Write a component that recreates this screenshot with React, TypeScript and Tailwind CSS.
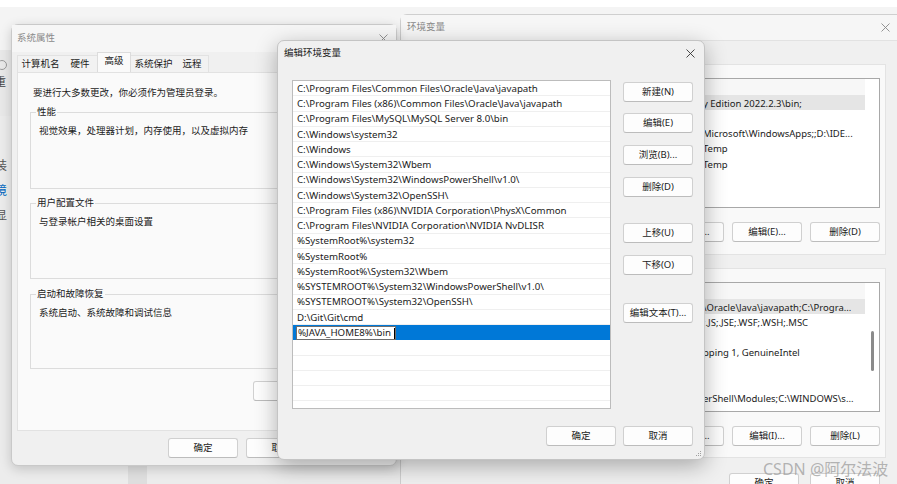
import React from "react";

const paths = [
  "C:\\Program Files\\Common Files\\Oracle\\Java\\javapath",
  "C:\\Program Files (x86)\\Common Files\\Oracle\\Java\\javapath",
  "C:\\Program Files\\MySQL\\MySQL Server 8.0\\bin",
  "C:\\Windows\\system32",
  "C:\\Windows",
  "C:\\Windows\\System32\\Wbem",
  "C:\\Windows\\System32\\WindowsPowerShell\\v1.0\\",
  "C:\\Windows\\System32\\OpenSSH\\",
  "C:\\Program Files (x86)\\NVIDIA Corporation\\PhysX\\Common",
  "C:\\Program Files\\NVIDIA Corporation\\NVIDIA NvDLISR",
  "%SystemRoot%\\system32",
  "%SystemRoot%",
  "%SystemRoot%\\System32\\Wbem",
  "%SYSTEMROOT%\\System32\\WindowsPowerShell\\v1.0\\",
  "%SYSTEMROOT%\\System32\\OpenSSH\\",
  "D:\\Git\\Git\\cmd",
];

// [name, hidden head of value, visible tail of value, selected]
const userVars: [string, string, string, boolean][] = [
  ["IntelliJ IDEA Community Edition", "D:\\IDEA\\IntelliJ IDEA Communit", "y Edition 2022.2.3\\bin;", true],
  ["OneDrive", "C:\\Users\\Administrator\\OneDrive", "", false],
  ["Path", "%USERPROFILE%\\AppData\\Local\\", "Microsoft\\WindowsApps;;D:\\IDE...", false],
  ["TEMP", "%USERPROFILE%\\AppData\\Local\\", "Temp", false],
  ["TMP", "%USERPROFILE%\\AppData\\Local\\", "Temp", false],
];

const sysVars: [string, string, string, boolean][] = [
  ["Path", "C:\\Program Files\\Common Files", "\\Oracle\\Java\\javapath;C:\\Progra...", true],
  ["PATHEXT", ".COM;.EXE;.BAT;.CMD;.VBS;.VBE", ";.JS;.JSE;.WSF;.WSH;.MSC", false],
  ["PROCESSOR_ARCHITECTURE", "AMD64", "", false],
  ["PROCESSOR_IDENTIFIER", "Intel64 Family 6 Model 154 Ste", "pping 1, GenuineIntel", false],
  ["PROCESSOR_LEVEL", "6", "", false],
  ["PROCESSOR_REVISION", "9a04", "", false],
  ["PSModulePath", "%ProgramFiles%\\WindowsPow", "erShell\\Modules;C:\\WINDOWS\\s...", false],
];

function Btn({ children, className = "" }: { children: React.ReactNode; className?: string }) {
  return (
    <div
      className={`flex h-[20px] w-[70px] flex-none items-center justify-center rounded-[3px] border border-[#d0d0d0] border-b-[#bcbcbc] bg-[#fdfdfd] pt-[1px] text-[9.5px] text-[#1b1b1b] ${className}`}
    >
      {children}
    </div>
  );
}

function CloseX({ color = "#333" }: { color?: string }) {
  return (
    <svg width="9" height="9" viewBox="0 0 9 9">
      <path d="M0.5 0.5 L8.5 8.5 M8.5 0.5 L0.5 8.5" stroke={color} strokeWidth="0.9" />
    </svg>
  );
}

function GroupBox({ label, text, className = "" }: { label: string; text: string; className?: string }) {
  return (
    <div className={`relative ml-[12px] w-[350px] border border-[#dcdcdc] ${className}`}>
      <span className="absolute -top-[8px] left-[5px] bg-[#fafafa] px-[1px] text-[9.5px] text-[#1b1b1b]">{label}</span>
      <div className="pl-[8px] pt-[11px] text-[9.5px] text-[#1b1b1b]">{text}</div>
    </div>
  );
}

function VarList({ rows, thumb }: { rows: [string, string, string, boolean][]; thumb?: boolean }) {
  return (
    <div className="ml-[5px] mt-[13px] flex h-[130px] w-[462px] border border-[#a8a8a8] bg-white">
      <div className="flex flex-1 flex-col">
        <div className="flex h-[16px] items-center bg-[#f7f7f7] pt-[2px] text-[9.5px] text-[#1b1b1b]">
          <span className="w-[95px] pl-[4px]">变量</span>
          <span>值</span>
        </div>
        {rows.map(([name, head, tail, sel]) => (
          <div
            key={name}
            className={`flex h-[15.3px] items-center whitespace-nowrap pt-[2px] text-[9.5px] text-[#1b1b1b] ${sel ? "bg-[#e5e5e5]" : ""}`}
          >
            <span className="w-[95px] flex-none overflow-hidden pl-[4px]">{name}</span>
            <span className="w-[189px] flex-none overflow-hidden text-right">{head}</span>
            <span className="overflow-hidden">{tail}</span>
          </div>
        ))}
      </div>
      <div className="flex w-[14px] flex-none flex-col pt-[48px]">
        {thumb && <div className="ml-[6px] h-[40px] w-[3px] rounded-full bg-[#8b8b8b]" />}
      </div>
    </div>
  );
}

export default function App() {
  return (
    <div className="relative h-[484px] w-[897px] overflow-hidden bg-[#ececec] [font-family:'Noto_Sans','Noto_Sans_CJK_SC',sans-serif]">
      {/* settings page behind */}
      <div className="flex h-full flex-col">
        <div className="h-[7px] bg-white" />
        <div className="h-[43px] bg-[#f4f4f4]" />
        <div className="flex h-[66px] w-[20px] flex-col bg-[#e9e9e9] pl-[1px] pt-[10px]">
          <div className="h-[10px] w-[10px] -translate-x-[4px] rounded-full border border-[#9a9a9a]" />
          <span className="-ml-[6px] mt-[4px] text-[11px] text-[#444]">重</span>
        </div>
        <div className="flex w-[20px] flex-col gap-[9px] pt-[42px] text-[12px] leading-[16px]">
          <span className="-ml-[5px] text-[#555]">装</span>
          <span className="-ml-[5px] text-[#0067c0]">境</span>
          <span className="-ml-[5px] text-[#555]">显</span>
        </div>
        <div className="mt-auto ml-[128px] h-[18px] w-[19px] bg-[#dedede]" />
      </div>

      {/* 环境变量 */}
      <div className="absolute left-[400px] top-[14px] flex h-[480px] w-[500px] flex-col rounded-tl-[7px] border-l border-t border-[#cfcfcf] bg-[#f0f0f0]">
        <div className="flex h-[26px] flex-none items-center justify-between border-b border-[#e2e2e2] bg-[#f6f6f6] pl-[6px] pr-[10px] text-[9.5px] text-[#8a8a8a]">
          <span>环境变量</span>
          <CloseX color="#888" />
        </div>
        <div className="ml-[11px] mt-[23px] h-[191px] w-[474px] border border-[#e3e3e3] bg-[#f9f9f9]">
          <VarList rows={userVars} />
          <div className="mr-[5px] mt-[14px] flex justify-end gap-[8px]">
            <Btn>新建(W)...</Btn>
            <Btn>编辑(E)...</Btn>
            <Btn>删除(D)</Btn>
          </div>
        </div>
        <div className="ml-[11px] mt-[13px] h-[190px] w-[474px] border border-[#e3e3e3] bg-[#f9f9f9]">
          <VarList rows={sysVars} thumb />
          <div className="mr-[5px] mt-[14px] flex justify-end gap-[8px]">
            <Btn>新建(W)...</Btn>
            <Btn>编辑(I)...</Btn>
            <Btn>删除(L)</Btn>
          </div>
        </div>
        <div className="ml-[328px] mt-[15px] flex gap-[11px]">
          <Btn>确定</Btn>
          <Btn>取消</Btn>
        </div>
      </div>

      {/* 系统属性 */}
      <div className="absolute left-[11px] top-[24px] flex h-[442px] w-[386px] flex-col rounded-[7px] border border-[#c9c9c9] bg-[#f0f0f0] shadow-[0_3px_12px_rgba(0,0,0,0.18)]">
        <div className="flex h-[27px] flex-none items-center justify-between bg-[#f6f6f6] pl-[5px] pr-[8px] text-[9.5px] text-[#8a8a8a]">
          <span>系统属性</span>
          <CloseX color="#888" />
        </div>
        <div className="ml-[5px] flex h-[20px] flex-none items-end text-[9.5px] text-[#1b1b1b]">
          <div className="flex h-[17px] w-[46px] items-center justify-center border-l border-t border-[#e2e2e2] bg-[#f2f2f2]">计算机名</div>
          <div className="flex h-[17px] w-[34px] items-center justify-center border-t border-[#e2e2e2] bg-[#f2f2f2]">硬件</div>
          <div className="flex h-[20px] w-[34px] items-center justify-center border-x border-t border-[#dcdcdc] bg-[#fafafa] pb-[3px]">高级</div>
          <div className="flex h-[17px] w-[45px] items-center justify-center border-t border-[#e2e2e2] bg-[#f2f2f2]">系统保护</div>
          <div className="flex h-[17px] w-[33px] items-center justify-center border-r border-t border-[#e2e2e2] bg-[#f2f2f2]">远程</div>
        </div>
        <div className="ml-[5px] flex h-[359px] w-[374px] flex-none flex-col border border-[#e2e2e2] bg-[#fafafa]">
          <div className="pl-[15px] pt-[13px] text-[9.5px] text-[#1b1b1b]">要进行大多数更改，你必须作为管理员登录。</div>
          <GroupBox className="mt-[12px] h-[77px]" label="性能" text="视觉效果，处理器计划，内存使用，以及虚拟内存" />
          <GroupBox className="mt-[14px] h-[76px]" label="用户配置文件" text="与登录帐户相关的桌面设置" />
          <GroupBox className="mt-[15px] h-[75px]" label="启动和故障恢复" text="系统启动、系统故障和调试信息" />
          <Btn className="ml-[235px] mt-[12px] w-[112px]">环境变量(N)...</Btn>
        </div>
        <div className="ml-[156px] mt-[7px] flex gap-[8px]">
          <Btn>确定</Btn>
          <Btn>取消</Btn>
          <Btn>应用(A)</Btn>
        </div>
      </div>

      {/* 编辑环境变量 */}
      <div className="absolute left-[277px] top-[40px] flex h-[420px] w-[428px] flex-col rounded-[7px] border border-[#c4c4c4] bg-[#f0f0f0] shadow-[0_6px_22px_rgba(0,0,0,0.3)]">
        <div className="flex h-[24px] flex-none items-center justify-between pl-[6px] pr-[9px] text-[9.5px] text-[#1b1b1b]">
          <span>编辑环境变量</span>
          <CloseX />
        </div>
        <div className="flex pl-[14px] pt-[15px]">
          <div className="flex h-[329px] w-[319px] flex-none flex-col overflow-hidden border border-[#bcbcbc] bg-white">
            {paths.map((p) => (
              <div
                key={p}
                className="flex h-[15.25px] flex-none items-center whitespace-nowrap border-b border-[#efefef] pl-[4px] pt-[2px] text-[9.7px] text-[#1b1b1b]"
              >
                {p}
              </div>
            ))}
            <div className="flex h-[15.25px] flex-none items-center bg-[#0078d7] pl-[3px]">
              <div className="flex h-[14px] items-center border border-[#6d6d6d] bg-white pl-[1px] pt-[1px] text-[9.7px] text-[#1b1b1b]">
                %JAVA_HOME8%\bin
                <span className="ml-[3px] h-[11px] w-px bg-black" />
              </div>
            </div>
            {[0, 1, 2, 3, 4].map((i) => (
              <div key={i} className="h-[15.25px] flex-none border-b border-[#efefef]" />
            ))}
          </div>
          <div className="ml-[12px] flex flex-col pt-[2px]">
            <Btn>新建(N)</Btn>
            <Btn className="mt-[11px]">编辑(E)</Btn>
            <Btn className="mt-[12px]">浏览(B)...</Btn>
            <Btn className="mt-[12px]">删除(D)</Btn>
            <Btn className="mt-[26px]">上移(U)</Btn>
            <Btn className="mt-[12px]">下移(O)</Btn>
            <Btn className="mt-[28px]">编辑文本(T)...</Btn>
          </div>
        </div>
        <div className="mt-[17px] flex justify-end gap-[7px] pr-[11px]">
          <Btn className="border-[#0067c0] border-b-[#0067c0]">确定</Btn>
          <Btn>取消</Btn>
        </div>
        <svg className="absolute bottom-[2px] right-[2px]" width="7" height="7" viewBox="0 0 7 7">
          <g fill="#a0a0a0">
            <rect x="5" y="1" width="1" height="1" />
            <rect x="3" y="3" width="1" height="1" />
            <rect x="5" y="3" width="1" height="1" />
            <rect x="1" y="5" width="1" height="1" />
            <rect x="3" y="5" width="1" height="1" />
            <rect x="5" y="5" width="1" height="1" />
          </g>
        </svg>
      </div>

      {/* watermark */}
      <div className="absolute left-[763px] top-[459px] whitespace-nowrap text-[16px] leading-[20px] text-[rgba(150,150,150,0.7)]">
        CSDN @阿尔法波
      </div>
    </div>
  );
}
